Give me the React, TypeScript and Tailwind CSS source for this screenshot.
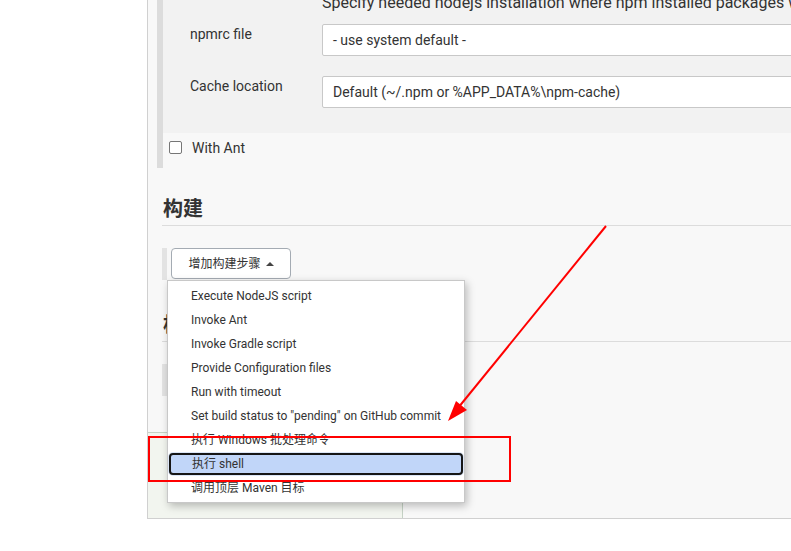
import React from "react";

const items = [
  "Execute NodeJS script",
  "Invoke Ant",
  "Invoke Gradle script",
  "Provide Configuration files",
  "Run with timeout",
  'Set build status to "pending" on GitHub commit',
  "执行 Windows 批处理命令",
  "执行 shell",
  "调用顶层 Maven 目标",
];

export default function App() {
  return (
    <div className="relative w-[791px] h-[551px] overflow-hidden bg-white flex font-['Roboto','Noto_Sans_CJK_SC',sans-serif] text-[#333]">
      <div className="w-[147px] shrink-0" />
      <div className="relative flex-1 h-[519px] border-l border-b border-[#d0d0d0] bg-[#f8f8f8] flex flex-col overflow-hidden">
        {/* inner nested section */}
        <div className="ml-[9px] border-l-[6px] border-[#dcdcdc] flex flex-col">
          <div className="bg-[#f2f2f2] h-[133px] flex flex-col">
            <div className="-mt-[7px] h-[20px] pl-[159px] text-[16px] leading-[20px] whitespace-nowrap">
              Specify needed nodejs installation where npm installed packages will be used
            </div>
            <div className="mt-[11px] flex">
              <div className="w-[159px] shrink-0 pl-[27px] text-[14px] leading-[20px]">npmrc file</div>
              <div className="h-[32px] w-[600px] shrink-0 border border-[#c8c8c8] rounded-[2px] bg-white pl-[10px] flex items-center text-[14px]">
                - use system default -
              </div>
            </div>
            <div className="mt-[20px] flex">
              <div className="w-[159px] shrink-0 pl-[27px] text-[14px] leading-[20px]">Cache location</div>
              <div className="h-[32px] w-[600px] shrink-0 border border-[#c8c8c8] rounded-[2px] bg-white pl-[10px] flex items-center text-[14px]">
                Default (~/.npm or %APP_DATA%\npm-cache)
              </div>
            </div>
          </div>
          <div className="h-[35px] flex items-start pt-[5px] pl-[6px]">
            <span className="mt-[3px] w-[13px] h-[13px] border border-[#767676] rounded-[2px] bg-white" />
            <span className="ml-[10px] text-[14px] leading-[20px]">With Ant</span>
          </div>
        </div>

        {/* 构建 */}
        <div className="ml-[14px] mt-[27px] pb-[2px] border-b border-[#dcdcdc]">
          <div className="pl-[1px] text-[20px] leading-[28px] font-bold">构建</div>
        </div>
        <div className="ml-[14px] mt-[22px] flex">
          <div className="w-[5px] h-[32px] bg-[#e3e3e3]" />
          <div className="ml-[4px] w-[120px] h-[31px] border border-[#a4abb3] rounded-[4px] bg-white flex items-center justify-center text-[12px]">
            增加构建步骤
            <span className="ml-[5px] w-0 h-0 border-l-[4px] border-r-[4px] border-b-[4px] border-l-transparent border-r-transparent border-b-[#444]" />
          </div>
        </div>

        {/* 构建后操作 */}
        <div className="ml-[14px] mt-[31px] pb-[2px] border-b border-[#dcdcdc]">
          <div className="pl-[1px] text-[20px] leading-[28px] font-bold">构建后操作</div>
        </div>
        <div className="ml-[14px] mt-[22px] flex">
          <div className="w-[5px] h-[32px] bg-[#e3e3e3]" />
          <div className="ml-[4px] w-[150px] h-[31px] border border-[#a4abb3] rounded-[4px] bg-white flex items-center justify-center text-[12px]">
            增加构建后操作步骤
          </div>
        </div>

        {/* bottom sticky bar */}
        <div className="mt-auto w-[255px] h-[86px] bg-[#f2f5ef] border-t border-r border-[#c5d2c5]" />
      </div>

      {/* dropdown menu */}
      <div className="absolute left-[167px] top-[280px] w-[298px] h-[223px] bg-white border border-[#c8c8c8] shadow-[2px_3px_8px_rgba(0,0,0,0.25)] py-[3px]">
        {items.map((t) =>
          t === "执行 shell" ? (
            <div key={t} className="h-[24px] px-[1px] py-[1px]">
              <div className="h-[22px] border-2 border-[#161616] rounded-[4px] bg-[#c1d6f9] pl-[21px] flex items-center text-[12px] whitespace-nowrap ring-1 ring-[#dbe6f7]">
                {t}
              </div>
            </div>
          ) : (
            <div key={t} className="h-[24px] pl-[23px] flex items-center text-[12px] whitespace-nowrap">
              {t}
            </div>
          )
        )}
      </div>

      {/* red annotations */}
      <svg className="absolute left-0 top-0 pointer-events-none" width="791" height="551" viewBox="0 0 791 551">
        <line x1="606" y1="226" x2="458" y2="408" stroke="#ff0000" strokeWidth="2" />
        <polygon points="448,421 456,401 467,410" fill="#ff0000" />
        <rect x="149" y="437" width="361" height="44" fill="none" stroke="#ff0000" strokeWidth="2" />
      </svg>
    </div>
  );
}
